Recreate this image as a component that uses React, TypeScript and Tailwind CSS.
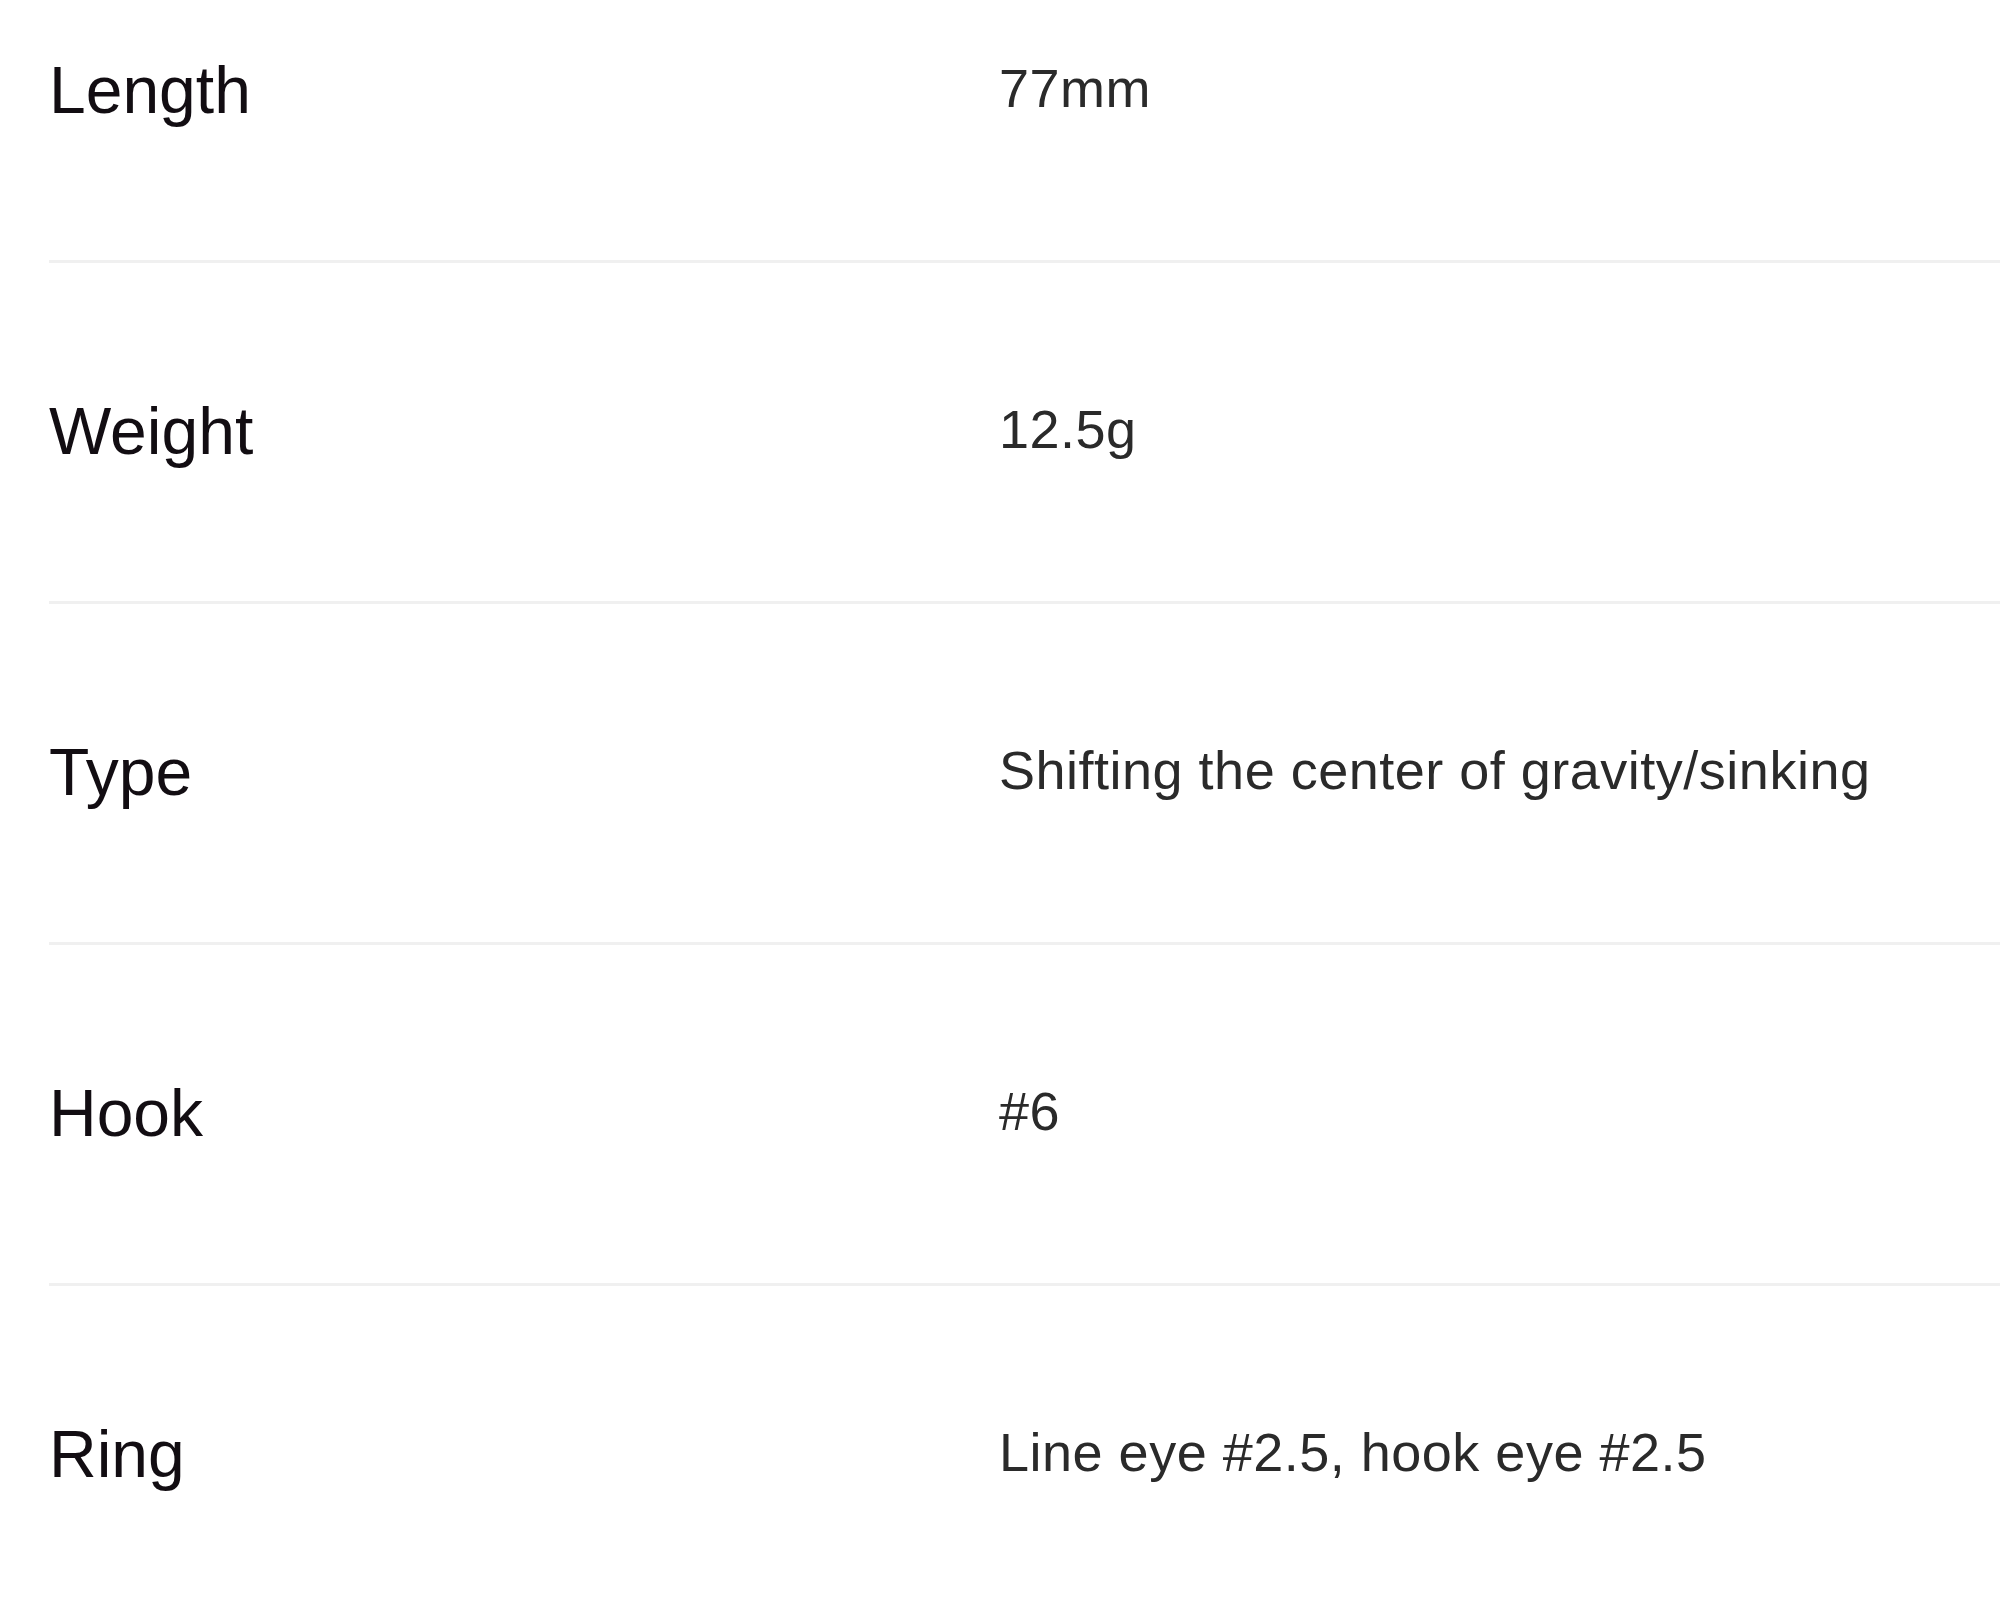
import React from "react";
import { JSX } from "react";

const specs = [
  { label: "Length", value: "77mm" },
  { label: "Weight", value: "12.5g" },
  { label: "Type", value: "Shifting the center of gravity/sinking" },
  { label: "Hook", value: "#6" },
  { label: "Ring", value: "Line eye #2.5, hook eye #2.5" },
];

export default function App(): JSX.Element {
  return (
    <div
      className="h-[1616px] w-full overflow-hidden bg-white"
      style={{ fontFamily: '"Liberation Sans", Arial, sans-serif' }}
    >
      {/* spec table, first row is partly scrolled off */}
      <div className="-mt-[78px] ml-[49px]">
        {specs.map((row) => (
          <div
            key={row.label}
            className="flex h-[341px] items-start border-b-[3px] border-[#f0f0f0]"
          >
            <div className="w-[950px] shrink-0 pt-[135px] text-[66px] leading-none text-[#120d12]">
              {row.label}
            </div>
            <div className="pt-[139px] text-[54px] leading-none tracking-[0.5px] text-[#2a2a2a]">
              {row.value}
            </div>
          </div>
        ))}
      </div>
    </div>
  );
}
